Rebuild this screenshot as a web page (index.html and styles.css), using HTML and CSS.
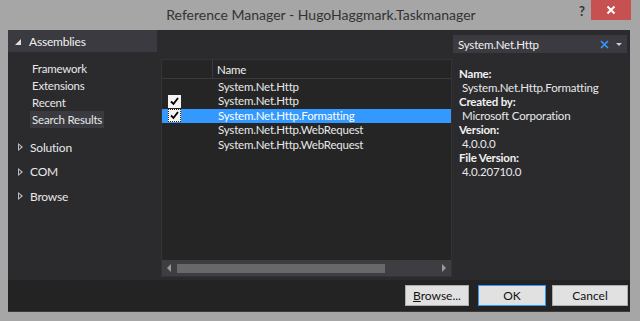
FILE: index.html
```html
<!DOCTYPE html>
<html>
<head>
<meta charset="utf-8">
<link rel="stylesheet" href="styles.css">
</head>
<body>
<div class="window">
  <div class="titlebar">
    <div class="title">Reference Manager - HugoHaggmark.Taskmanager</div>
    <div class="help">?</div>
    <div class="close"><svg width="10" height="10" viewBox="0 0 10 10"><path d="M1.5 1.5 L8.5 8.5 M8.5 1.5 L1.5 8.5" stroke="#fff" stroke-width="2"/></svg></div>
  </div>
  <div class="client">
    <div class="main">
      <div class="nav">
        <div class="nav-head"><span class="tri-open"></span>Assemblies</div>
        <div class="nav-sub">
          <div class="sub-item">Framework</div>
          <div class="sub-item">Extensions</div>
          <div class="sub-item">Recent</div>
          <div class="sub-item sel">Search Results</div>
        </div>
        <div class="nav-group"><span class="tri-closed"></span>Solution</div>
        <div class="nav-group"><span class="tri-closed"></span>COM</div>
        <div class="nav-group"><span class="tri-closed"></span>Browse</div>
      </div>
      <div class="center">
        <div class="list">
          <div class="list-head">
            <div class="col-check"></div>
            <div class="col-name">Name</div>
          </div>
          <div class="rows">
            <div class="row"><div class="col-check"></div><div class="col-name">System.Net.Http</div></div>
            <div class="row"><div class="col-check"><span class="cb"><svg width="11" height="11" viewBox="0 0 11 11"><path d="M2 5.5 L4.5 8 L9 2" stroke="#000" stroke-width="1.8" fill="none"/></svg></span></div><div class="col-name">System.Net.Http</div></div>
            <div class="row selected"><div class="col-check"><span class="cb focus"><svg width="11" height="11" viewBox="0 0 11 11"><path d="M2 5.5 L4.5 8 L9 2" stroke="#000" stroke-width="1.8" fill="none"/></svg></span></div><div class="col-name">System.Net.Http.Formatting</div></div>
            <div class="row"><div class="col-check"></div><div class="col-name">System.Net.Http.WebRequest</div></div>
            <div class="row"><div class="col-check"></div><div class="col-name">System.Net.Http.WebRequest</div></div>
          </div>
          <div class="hscroll">
            <span class="arrow-l"></span>
            <div class="track"><div class="thumb"></div></div>
            <span class="arrow-r"></span>
          </div>
        </div>
      </div>
      <div class="side">
        <div class="search">
          <span class="search-text">System.Net.Http</span>
          <span class="search-x"><svg width="9" height="9" viewBox="0 0 9 9"><path d="M1 1 L8 8 M8 1 L1 8" stroke="#3399ff" stroke-width="1.6"/></svg></span>
          <span class="search-drop"></span>
        </div>
        <div class="details">
          <div class="lbl">Name:</div>
          <div class="val">System.Net.Http.Formatting</div>
          <div class="lbl">Created by:</div>
          <div class="val">Microsoft Corporation</div>
          <div class="lbl">Version:</div>
          <div class="val">4.0.0.0</div>
          <div class="lbl">File Version:</div>
          <div class="val">4.0.20710.0</div>
        </div>
      </div>
    </div>
    <div class="footer">
      <button class="btn browse"><u>B</u>rowse...</button>
      <button class="btn ok">OK</button>
      <button class="btn cancel">Cancel</button>
    </div>
  </div>
</div>
</body>
</html>
```

FILE: styles.css
```css
* { box-sizing: border-box; }
html, body { margin: 0; padding: 0; }
body {
  width: 640px;
  height: 321px;
  overflow: hidden;
  background: #a6a6a6;
  font-family: "Lato", "Noto Sans", sans-serif;
  font-size: 11.5px;
  letter-spacing: -0.2px;
}
.window {
  width: 640px;
  height: 321px;
  display: flex;
  flex-direction: column;
  background: #a6a6a6;
}
.titlebar {
  height: 30px;
  position: relative;
  display: flex;
  align-items: center;
  justify-content: center;
}
.title {
  font-size: 14px;
  letter-spacing: 0;
  color: #333;
  margin-top: -2px;
  margin-left: 2px;
}
.help {
  position: absolute;
  left: 579px;
  top: 3px;
  font-size: 13px;
  font-weight: bold;
  color: #333;
}
.close {
  position: absolute;
  left: 591px;
  top: 0;
  width: 40px;
  height: 20px;
  background: #c75050;
  display: flex;
  align-items: center;
  justify-content: center;
}
.client {
  margin: 0 10px 9px 8px;
  flex: 1;
  display: flex;
  flex-direction: column;
  background: #2b2b2e;
  border: 1px solid #3a3a3a;
  border-width: 0 0 1px 0;
}
.main {
  flex: 1;
  display: flex;
  color: #e8e8e8;
}
.nav {
  width: 149px;
  display: flex;
  flex-direction: column;
}
.nav-head {
  height: 22px;
  background: #3a3a40;
  display: flex;
  align-items: center;
  padding-left: 7px;
  font-size: 12px;
  color: #f1f1f1;
}
.tri-open {
  width: 0; height: 0;
  border-left: 6px solid transparent;
  border-bottom: 6px solid #e0e0e0;
  margin-right: 8px;
  margin-top: 1px;
}
.tri-closed {
  width: 0; height: 0;
  border-top: 4px solid transparent;
  border-bottom: 4px solid transparent;
  border-left: 5px solid #bdbdbd;
  margin-right: 7px;
  margin-left: 2px;
  position: relative;
}
.tri-closed::after {
  content: "";
  position: absolute;
  left: -4px;
  top: -2px;
  border-top: 2px solid transparent;
  border-bottom: 2px solid transparent;
  border-left: 2.5px solid #2b2b2e;
}
.nav-sub {
  padding: 8px 0 7px 22px;
  display: flex;
  flex-direction: column;
}
.sub-item {
  height: 17px;
  line-height: 17px;
  padding-left: 2px;
  align-self: flex-start;
}
.sub-item.sel { background: #3a3a40; padding-right: 2px; }
.nav-group {
  height: 24.5px;
  display: flex;
  align-items: center;
  padding-left: 8px;
  font-size: 12px;
}
.center {
  width: 295px;
  padding: 29px 0 3px 4px;
  display: flex;
  flex-direction: column;
}
.list {
  flex: 1;
  background: #252526;
  border: 1px solid #333337;
  display: flex;
  flex-direction: column;
}
.list-head {
  height: 19px;
  display: flex;
  border-bottom: 1px solid #3a3a3e;
}
.list-head .col-check { border-right: 1px solid #3a3a3e; }
.list-head .col-name { line-height: 19px; color: #f1f1f1; padding-left: 4px; }
.col-check {
  width: 51px;
  display: flex;
  align-items: center;
  padding-left: 6px;
}
.col-name { padding-left: 5px; white-space: nowrap; }
.rows { flex: 1; padding-top: 0.5px; }
.row {
  height: 14.5px;
  line-height: 14.5px;
  display: flex;
  color: #e8e8e8;
}
.row.selected { background: #3399ff; color: #fff; }
.cb {
  width: 13px;
  height: 13px;
  background: #f4f4f4;
  display: flex;
  align-items: center;
  justify-content: center;
}
.cb.focus { outline: 1px dotted #222; outline-offset: -1px; }
.hscroll {
  height: 16px;
  background: #3e3e42;
  display: flex;
  align-items: center;
  padding: 0 5px;
}
.arrow-l {
  width: 0; height: 0;
  border-top: 4px solid transparent;
  border-bottom: 4px solid transparent;
  border-right: 4px solid #999;
}
.arrow-r {
  width: 0; height: 0;
  border-top: 4px solid transparent;
  border-bottom: 4px solid transparent;
  border-left: 4px solid #999;
}
.track { flex: 1; padding: 0 5px 0 6px; }
.thumb { width: 208px; height: 9px; background: #686868; }
.side {
  flex: 1;
  padding: 5px 3px 0 1px;
}
.search {
  height: 18px;
  background: #3a3a40;
  display: flex;
  align-items: center;
  padding-left: 5px;
  color: #f1f1f1;
}
.search-text { flex: 1; }
.search-x { display: flex; margin-right: 7px; }
.search-drop {
  width: 0; height: 0;
  border-left: 3px solid transparent;
  border-right: 3px solid transparent;
  border-top: 3px solid #ccc;
  margin-right: 5px;
}
.details {
  padding: 14px 0 0 6px;
  line-height: 14px;
}
.lbl { font-weight: bold; color: #f1f1f1; }
.val { padding-left: 3px; color: #e8e8e8; }
.footer {
  height: 31px;
  background: #232323;
  display: flex;
  justify-content: flex-end;
  align-items: center;
  padding-right: 2px;
  gap: 6px;
}
.btn {
  height: 21px;
  background: #e1e1e1;
  border: 1px solid #adadad;
  font-family: "Lato", "Noto Sans", sans-serif;
  font-size: 12px;
  color: #111;
  padding: 0;
  margin: 0;
}
.browse { width: 64px; margin-right: 3px; }
.ok { width: 68px; border-color: #3399ff; }
.cancel { width: 76px; }
```
